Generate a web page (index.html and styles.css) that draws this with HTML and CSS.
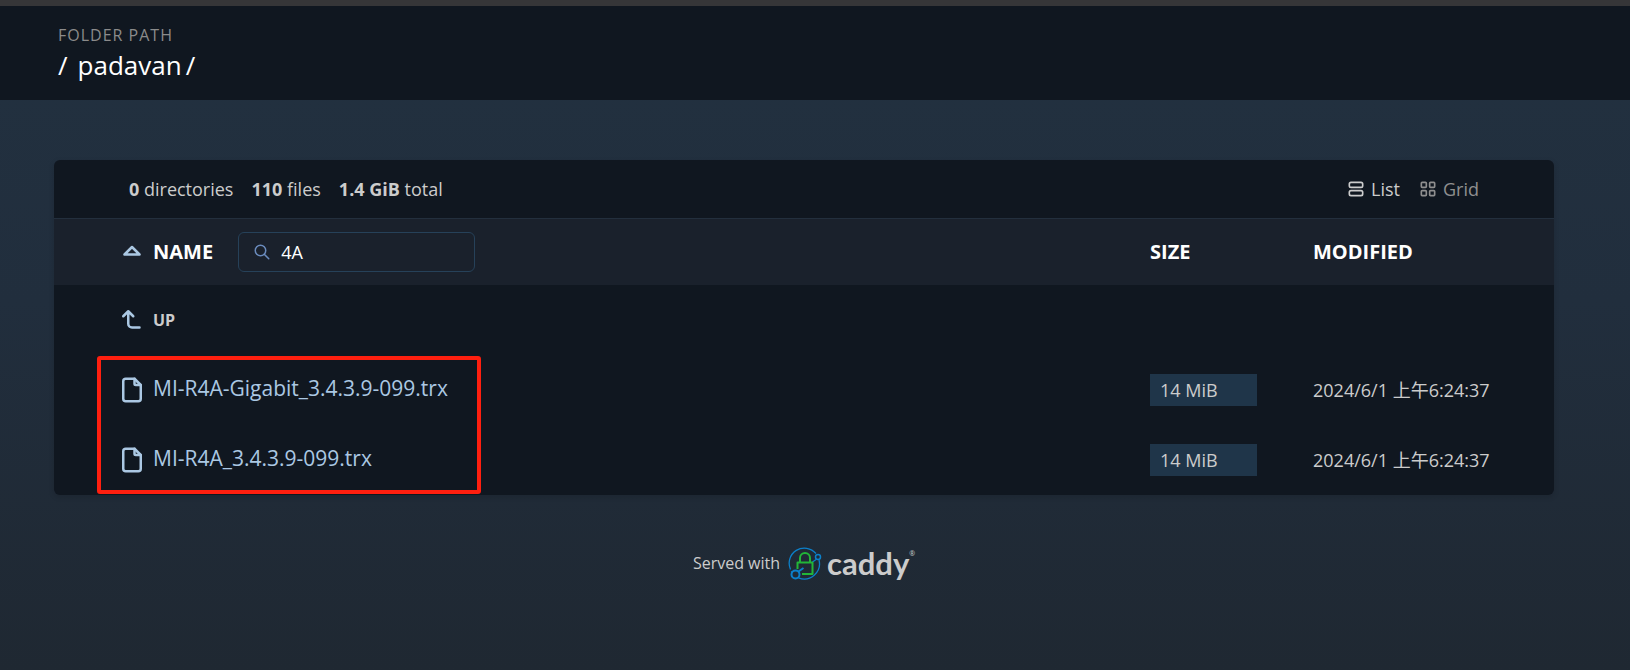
FILE: index.html
```html
<!DOCTYPE html>
<html lang="en">
<head>
    <meta charset="UTF-8">
    <meta name="viewport" content="width=device-width, initial-scale=1.0">
    <title>padavan/</title>
    <link rel="stylesheet" href="styles.css">
</head>
<body>
    <header>
        <div class="breadcrumbs">Folder Path</div>
        <h1><a href="../">/</a><a href="./" class="folder">padavan</a><span>/</span></h1>
    </header>
    <main>
        <div class="listing">
            <div class="meta">
                <div class="summary">
                    <span><b>0</b> directories</span>
                    <span><b>110</b> files</span>
                    <span><b>1.4 GiB</b> total</span>
                </div>
                <nav class="layouts">
                    <a href="#list" class="layout current">
                        <svg class="icon" width="20" height="20" viewBox="0 0 24 24">
                            <rect x="4" y="4" width="16" height="6" rx="2"/>
                            <rect x="4" y="14" width="16" height="6" rx="2"/>
                        </svg>
                        List
                    </a>
                    <a href="#grid" class="layout">
                        <svg class="icon" width="20" height="20" viewBox="0 0 24 24">
                            <rect x="4" y="4" width="6" height="6" rx="1"/>
                            <rect x="14" y="4" width="6" height="6" rx="1"/>
                            <rect x="4" y="14" width="6" height="6" rx="1"/>
                            <rect x="14" y="14" width="6" height="6" rx="1"/>
                        </svg>
                        Grid
                    </a>
                </nav>
            </div>
            <table>
                <thead>
                    <tr>
                        <th>
                            <div class="name-head">
                                <a href="?sort=name&amp;order=desc" aria-label="Sort by name">
                                    <svg class="icon" width="30" height="30" viewBox="0 0 24 24">
                                        <path d="M18 14l-6 -6l-6 6h12"/>
                                    </svg>
                                </a>
                                <a href="?sort=name">Name</a>
                                <div class="search">
                                    <svg class="icon" width="18" height="18" viewBox="0 0 24 24">
                                        <circle cx="10" cy="10" r="7"/>
                                        <path d="M21 21l-6 -6"/>
                                    </svg>
                                    <input type="search" id="filter" value="4A" aria-label="Search">
                                </div>
                            </div>
                        </th>
                        <th class="size-col"><a href="?sort=size">Size</a></th>
                        <th class="date-col"><a href="?sort=time">Modified</a></th>
                    </tr>
                </thead>
                <tbody>
                    <tr>
                        <td colspan="3">
                            <a href=".." class="entry">
                                <svg class="icon" width="30" height="30" viewBox="0 0 24 24">
                                    <path d="M18 18h-6a3 3 0 0 1 -3 -3v-10l-4 4m8 0l-4 -4"/>
                                </svg>
                                <span class="up">Up</span>
                            </a>
                        </td>
                    </tr>
                    <tr>
                        <td>
                            <a href="./MI-R4A-Gigabit_3.4.3.9-099.trx" class="entry">
                                <svg class="icon" width="30" height="30" viewBox="0 0 24 24">
                                    <path d="M14 3v4a1 1 0 0 0 1 1h4"/>
                                    <path d="M17 21h-10a2 2 0 0 1 -2 -2v-14a2 2 0 0 1 2 -2h7l5 5v11a2 2 0 0 1 -2 2z"/>
                                </svg>
                                <span class="name">MI-R4A-Gigabit_3.4.3.9-099.trx</span>
                            </a>
                        </td>
                        <td><div class="sizebar">14 MiB</div></td>
                        <td><time datetime="2024-06-01T06:24:37">2024/6/1 上午6:24:37</time></td>
                    </tr>
                    <tr>
                        <td>
                            <a href="./MI-R4A_3.4.3.9-099.trx" class="entry">
                                <svg class="icon" width="30" height="30" viewBox="0 0 24 24">
                                    <path d="M14 3v4a1 1 0 0 0 1 1h4"/>
                                    <path d="M17 21h-10a2 2 0 0 1 -2 -2v-14a2 2 0 0 1 2 -2h7l5 5v11a2 2 0 0 1 -2 2z"/>
                                </svg>
                                <span class="name">MI-R4A_3.4.3.9-099.trx</span>
                            </a>
                        </td>
                        <td><div class="sizebar">14 MiB</div></td>
                        <td><time datetime="2024-06-01T06:24:37">2024/6/1 上午6:24:37</time></td>
                    </tr>
                </tbody>
            </table>
            <div class="highlight"></div>
        </div>
    </main>
    <footer>
        <span class="served">Served with</span>
        <a href="#caddy" class="caddy">
            <svg width="34" height="34" viewBox="0 0 34 34" fill="none">
                <g stroke="#0c80ca" stroke-width="1.300">
                    <path d="M28 6.500A15.200 15.200 0 0 0 2.500 22.500"/>
                    <path d="M3.200 24.300L4 25.500"/>
                    <path d="M10.500 30.800A15.200 15.200 0 0 0 31 13"/>
                    <path d="M28 12.500L24.500 15"/>
                    <circle cx="30" cy="10" r="2.500" stroke-width="1.500"/>
                    <circle cx="7.500" cy="27.500" r="4" stroke-width="2"/>
                    <path d="M10.500 24.500L15.500 21" stroke-width="2"/>
                </g>
                <g stroke="#22b638" stroke-width="2" stroke-linejoin="round">
                    <path d="M9.500 22v-6.500h15v11.500h-10.500"/>
                    <path d="M12 15v-4a5 5 0 0 1 10 0v4"/>
                </g>
            </svg>
            <span class="wordmark">caddy</span><span class="reg">®</span>
        </a>
    </footer>
</body>
</html>
```
FILE: styles.css
```css
* {
    box-sizing: border-box;
    margin: 0;
    padding: 0;
}
body {
    min-height: 100vh;
    font-family: "Open Sans", "Noto Sans CJK SC", sans-serif;
    font-size: 18px;
    line-height: 24px;
    color: #ccc;
    background: linear-gradient(180deg, #223140 0%, #212e3d 45%, #1f2832 100%);
}
a {
    color: inherit;
    text-decoration: none;
}
.icon {
    flex: none;
    fill: none;
    stroke: currentColor;
    stroke-width: 2;
    stroke-linecap: round;
    stroke-linejoin: round;
}
header {
    padding: 18px 58px 16px;
    border-top: 6px solid #363638;
    background: #101720;
}
.breadcrumbs {
    font-size: 16px;
    line-height: 22px;
    letter-spacing: 1px;
    text-transform: uppercase;
    color: #8b8b8b;
}
h1 {
    display: flex;
    gap: 4px;
    font-size: 26px;
    font-weight: normal;
    line-height: 38px;
    color: #fff;
}
.folder {
    margin-left: 6px;
}
main {
    padding: 60px 76px 0 54px;
}
.listing {
    position: relative;
    border-radius: 6px;
    overflow: hidden;
    background: #101720;
    box-shadow: 0 2px 5px 1px rgba(0, 0, 0, 0.1);
}
.meta {
    display: flex;
    justify-content: space-between;
    padding: 17px 75px;
    border-bottom: 1px solid #232f3d;
}
.summary,
.layouts {
    display: flex;
    gap: 18px;
}
.layout {
    display: flex;
    align-items: center;
    gap: 5px;
    color: #8f8f8f;
}
.layout.current {
    color: #ccc;
}
table {
    width: 100%;
    border-collapse: collapse;
}
tr {
    height: 70px;
}
thead tr {
    height: 66px;
    background: #1a212c;
}
th {
    font-size: 20px;
    text-align: left;
    text-transform: uppercase;
    color: #fff;
}
th:first-child,
td:first-child {
    padding-left: 63px;
}
.size-col {
    width: 163px;
}
.date-col {
    width: 241px;
}
.name-head,
.entry {
    display: flex;
    align-items: center;
    gap: 6px;
}
.name-head .icon {
    display: block;
    color: #abc8e3;
}
.search {
    display: flex;
    align-items: center;
    gap: 10px;
    width: 237px;
    height: 40px;
    margin-left: 19px;
    padding: 0 14px;
    border: 1px solid #264159;
    border-radius: 6px;
}
.name-head .search .icon {
    color: #6a8bbd;
}
.search input {
    flex: 1;
    min-width: 0;
    border: none;
    outline: none;
    background: none;
    font-family: inherit;
    font-size: 18px;
    color: #fff;
}
.entry {
    color: #abc8e3;
}
.name {
    font-size: 21px;
    padding-bottom: 5px;
}
.up {
    font-size: 16px;
    font-weight: bold;
    text-transform: uppercase;
    color: #ccc;
}
.sizebar {
    width: 107px;
    padding: 4px 10px;
    background: #1f3549;
}
.highlight {
    position: absolute;
    left: 43px;
    bottom: 1px;
    width: 384px;
    height: 138px;
    border: 4px solid #ff1f0f;
    border-radius: 3px;
}
footer {
    display: flex;
    align-items: center;
    justify-content: center;
    gap: 8px;
    padding: 52px 76px 40px 54px;
}
.served {
    font-size: 16px;
    padding-bottom: 3px;
}
.caddy {
    display: flex;
    align-items: center;
}
.wordmark {
    margin-left: 5px;
    padding-bottom: 2px;
    font-family: Lato, sans-serif;
    font-size: 31px;
    font-weight: bold;
    line-height: 32px;
}
.reg {
    align-self: flex-start;
    font-size: 7px;
    line-height: 14px;
}
```
